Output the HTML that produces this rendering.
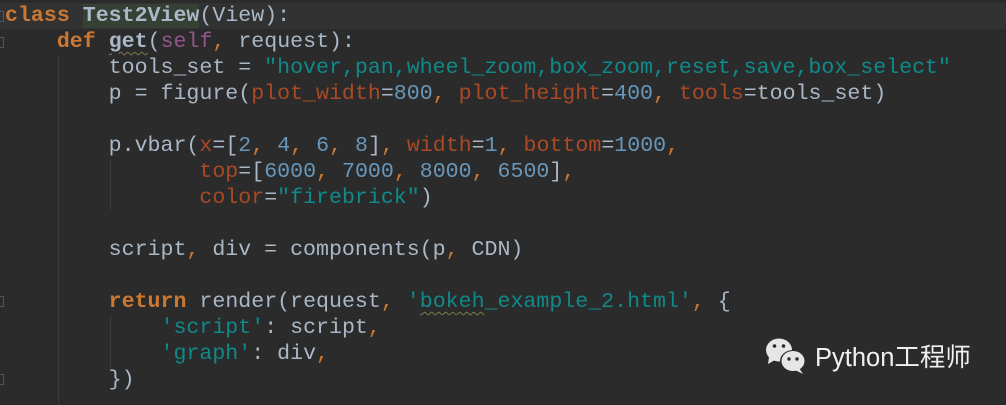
<!DOCTYPE html>
<html><head><meta charset="utf-8"><style>
body{margin:0;width:1006px;height:405px;background:#2b2b2b;overflow:hidden;position:relative;}
.l{position:absolute;left:5px;height:26px;line-height:26px;font-size:21.6px;color:#a9b7c6;white-space:pre;font-family:"Liberation Mono","Courier New","Nimbus Mono PS","DejaVu Sans Mono",monospace;}
.k{color:#cc7832;font-weight:bold}
.c{color:#cc7832}
.s{color:#0f8a8a}
.n{color:#6897bb}
.p{color:#aa4926}
.f{color:#94558d}
.b{font-weight:bold}
.hl{background:#344134}
.w{text-decoration:underline wavy #7a7a4a;text-underline-offset:4px;text-decoration-thickness:1px}
.g{position:absolute;width:1px;background:#3b3b3b}
.fold{position:absolute;left:0;width:3px;height:9px;border:1px solid #555;border-left:none}
</style></head><body>
<div style="position:absolute;left:0;top:3px;width:1006px;height:26px;background:#323232"></div>
<div class="g" style="left:58px;top:55px;height:350px"></div>
<div class="g" style="left:110px;top:160px;height:50px"></div>
<div class="g" style="left:110px;top:315px;height:55px"></div>
<div class="fold" style="top:11px"></div>
<div class="fold" style="top:37px"></div>
<div class="fold" style="top:296px"></div>
<div class="fold" style="top:374px"></div>
<div class="l" style="top:3px"><span class="k">class</span> <span class="hl b">Test2View</span>(View):</div>
<div class="l" style="top:29px">    <span class="k">def</span> <span class="b w">get</span>(<span class="f">self</span><span class="c">,</span> request):</div>
<div class="l" style="top:55px">        tools_set = <span class="s">"hover,pan,wheel_zoom,box_zoom,reset,save,box_select"</span></div>
<div class="l" style="top:81px">        p = figure(<span class="p">plot_width</span>=<span class="n">800</span><span class="c">,</span> <span class="p">plot_height</span>=<span class="n">400</span><span class="c">,</span> <span class="p">tools</span>=tools_set)</div>
<div class="l" style="top:133px">        p.vbar(<span class="p">x</span>=[<span class="n">2</span><span class="c">,</span> <span class="n">4</span><span class="c">,</span> <span class="n">6</span><span class="c">,</span> <span class="n">8</span>]<span class="c">,</span> <span class="p">width</span>=<span class="n">1</span><span class="c">,</span> <span class="p">bottom</span>=<span class="n">1000</span><span class="c">,</span></div>
<div class="l" style="top:159px">               <span class="p">top</span>=[<span class="n">6000</span><span class="c">,</span> <span class="n">7000</span><span class="c">,</span> <span class="n">8000</span><span class="c">,</span> <span class="n">6500</span>]<span class="c">,</span></div>
<div class="l" style="top:185px">               <span class="p">color</span>=<span class="s">"firebrick"</span>)</div>
<div class="l" style="top:237px">        script<span class="c">,</span> div = components(p<span class="c">,</span> CDN)</div>
<div class="l" style="top:289px">        <span class="k">return</span> render(request<span class="c">,</span> <span class="s">'<span class="w">bokeh</span>_example_2.html'</span><span class="c">,</span> {</div>
<div class="l" style="top:315px">            <span class="s">'script'</span>: script<span class="c">,</span></div>
<div class="l" style="top:341px">            <span class="s">'graph'</span>: div<span class="c">,</span></div>
<div class="l" style="top:367px">        })</div>
<svg style="position:absolute;left:764px;top:336px" width="46" height="40" viewBox="0 0 46 40">
<ellipse cx="15" cy="14" rx="13" ry="11.5" fill="#e6e6e6"/>
<path d="M5 21 L4 28 L11 24 Z" fill="#e6e6e6"/>
<circle cx="10.5" cy="10" r="1.8" fill="#2b2b2b"/><circle cx="19.5" cy="10" r="1.8" fill="#2b2b2b"/>
<ellipse cx="29" cy="25" rx="13" ry="11" fill="#2b2b2b"/>
<ellipse cx="29" cy="25" rx="11.5" ry="10" fill="#e6e6e6"/>
<path d="M35 32 L39 38 L31 34 Z" fill="#e6e6e6"/>
<circle cx="25" cy="23" r="1.7" fill="#2b2b2b"/><circle cx="33" cy="23" r="1.7" fill="#2b2b2b"/>
</svg>
<div style="position:absolute;left:815px;top:341px;font-family:'Liberation Sans','Noto Sans CJK SC',sans-serif;font-size:25.5px;color:#f0f0f0;line-height:34px">Python工程师</div>
</body></html>
